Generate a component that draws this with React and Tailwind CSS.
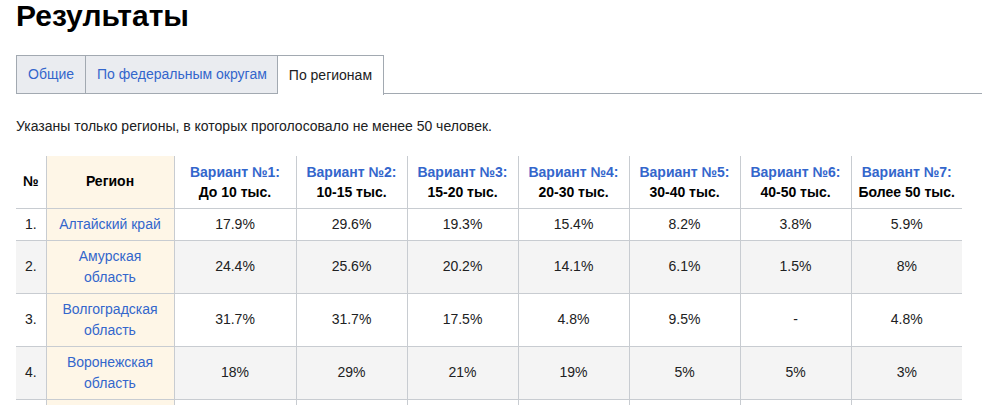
const rows = [
  ["1.", ["Алтайский край"], ["17.9%", "29.6%", "19.3%", "15.4%", "8.2%", "3.8%", "5.9%"]],
  ["2.", ["Амурская", "область"], ["24.4%", "25.6%", "20.2%", "14.1%", "6.1%", "1.5%", "8%"]],
  ["3.", ["Волгоградская", "область"], ["31.7%", "31.7%", "17.5%", "4.8%", "9.5%", "-", "4.8%"]],
  ["4.", ["Воронежская", "область"], ["18%", "29%", "21%", "19%", "5%", "5%", "3%"]],
  ["5.", ["Иркутская", "область"], ["20%", "27%", "22%", "16%", "7%", "4%", "4%"]],
];

const variants = [
  ["Вариант №1:", "До 10 тыс."],
  ["Вариант №2:", "10-15 тыс."],
  ["Вариант №3:", "15-20 тыс."],
  ["Вариант №4:", "20-30 тыс."],
  ["Вариант №5:", "30-40 тыс."],
  ["Вариант №6:", "40-50 тыс."],
  ["Вариант №7:", "Более 50 тыс."],
];

const App = () => {
  return (
    <div className="bg-white min-h-screen pl-4 pr-2 font-['Liberation_Sans',Arial,sans-serif] text-[14px] text-[#202122]">
      <h1 className="text-[30px] font-bold leading-[32px] text-black">Результаты</h1>

      {/* Tabs */}
      <div className="mt-[23px] flex border-b border-[#a2a9b1] h-[39px]">
        <a href="#" className="flex items-center px-[11px] bg-[#eaecf0] border border-b-0 border-[#a2a9b1] text-[#3366cc]">Общие</a>
        <a href="#" className="flex items-center pl-[11px] pr-[10px] bg-[#eaecf0] border border-l-0 border-b-0 border-[#a2a9b1] text-[#3366cc]">По федеральным округам</a>
        <div className="flex items-center px-[11px] bg-white border border-l-0 border-b-0 border-[#a2a9b1] -mb-px h-[40px] text-[#202122]">По регионам</div>
      </div>

      <p className="mt-[24px] leading-[16px] text-[#202122]">Указаны только регионы, в которых проголосовало не менее 50 человек.</p>

      {/* Table */}
      <table className="mt-[22px] border-collapse leading-[21px] text-center">
        <thead>
          <tr className="h-[52px]">
            <th className="w-[30px] px-1 font-bold text-black border-r border-[#c8ccd1]">№</th>
            <th className="w-[128px] px-1 font-bold text-black bg-[#fef6e7] border-x border-[#c8ccd1]">Регион</th>
            {variants.map(([v, r], i) => (
              <th key={v} className={`${i === 0 ? "w-[122px]" : "w-[111px]"} px-1 font-bold leading-[20px] border-[#c8ccd1] ${i < 6 ? "border-r" : ""}`}>
                <div className="text-[#3366cc]">{v}</div>
                <div className="text-black">{r}</div>
              </th>
            ))}
          </tr>
        </thead>
        <tbody>
          {rows.map(([n, region, vals], ri) => (
            <tr key={n} className={`border-t border-[#c8ccd1] ${ri % 2 === 1 ? "bg-[#f4f4f4]" : "bg-white"}`}>
              <td className="py-[5px] px-1 border-r border-[#c8ccd1]">{n}</td>
              <td className="py-[5px] px-1 bg-[#fef6e7] border-x border-[#c8ccd1]">
                <a href="#" className="text-[#3366cc]">
                  {region.map((l, k) => (
                    <div key={k}>{l}</div>
                  ))}
                </a>
              </td>
              {vals.map((v, i) => (
                <td key={i} className={`py-[5px] px-1 border-[#c8ccd1] ${i < 6 ? "border-r" : ""}`}>{v}</td>
              ))}
            </tr>
          ))}
        </tbody>
      </table>
    </div>
  );
};

export default App;
